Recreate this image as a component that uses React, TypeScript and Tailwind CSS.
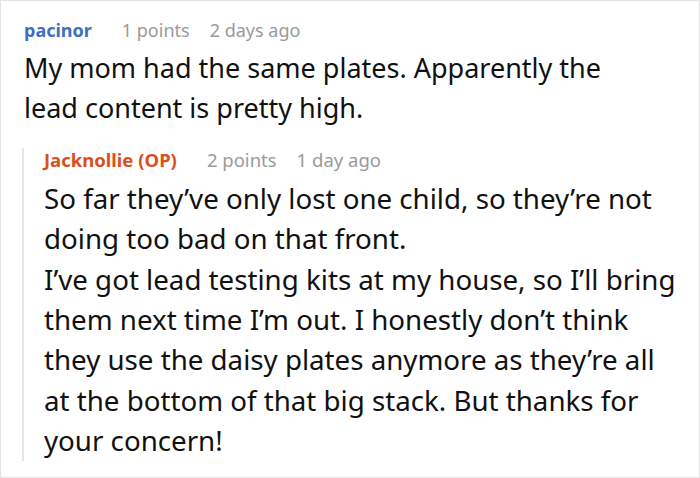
import React from 'react';

type CommentProps = {
  author: string;
  authorColor: string;
  points: string;
  time: string;
  headerSize: string;
  bodySize: string;
  lines: string[];
};

const Comment: React.FC<CommentProps> = ({ author, authorColor, points, time, headerSize, bodySize, lines }) => (
  <div>
    <div className={`flex items-center leading-[24px] ${headerSize}`}>
      <span className={`font-bold ${authorColor}`}>{author}</span>
      <span className="ml-[30px] text-[#9a9a9a]">{points}</span>
      <span className="ml-[20px] text-[#9a9a9a]">{time}</span>
    </div>
    <div className={`mt-[6px] leading-[40.4px] text-[#111] ${bodySize}`}>
      {lines.map((l, i) => (
        <p key={i}>{l}</p>
      ))}
    </div>
  </div>
);

export default function App() {
  return (
    <div
      className="w-[700px] h-[478px] bg-white border border-[#e3e3e3] overflow-hidden pt-[17px] pl-[23px] pr-[20px]"
      style={{ fontFamily: '"Noto Sans", "Open Sans", sans-serif' }}
    >
      <div className="pr-[30px]">
        <Comment
          author="pacinor"
          authorColor="text-[#3d6fc2]"
          points="1 points"
          time="2 days ago"
          headerSize="text-[18px]"
          bodySize="text-[27px]"
          lines={['My mom had the same plates. Apparently the lead content is pretty high.']}
        />
      </div>
      <div className="mt-[19px] -ml-[2px] border-l-2 border-[#e6e6e6] pl-[20px]">
        <Comment
          author="Jacknollie (OP)"
          authorColor="text-[#dc4f1d]"
          points="2 points"
          time="1 day ago"
          headerSize="text-[18.5px]"
          bodySize="text-[27.7px]"
          lines={[
            'So far they’ve only lost one child, so they’re not doing too bad on that front.',
            'I’ve got lead testing kits at my house, so I’ll bring them next time I’m out. I honestly don’t think they use the daisy plates anymore as they’re all at the bottom of that big stack. But thanks for your concern!',
          ]}
        />
      </div>
    </div>
  );
}
